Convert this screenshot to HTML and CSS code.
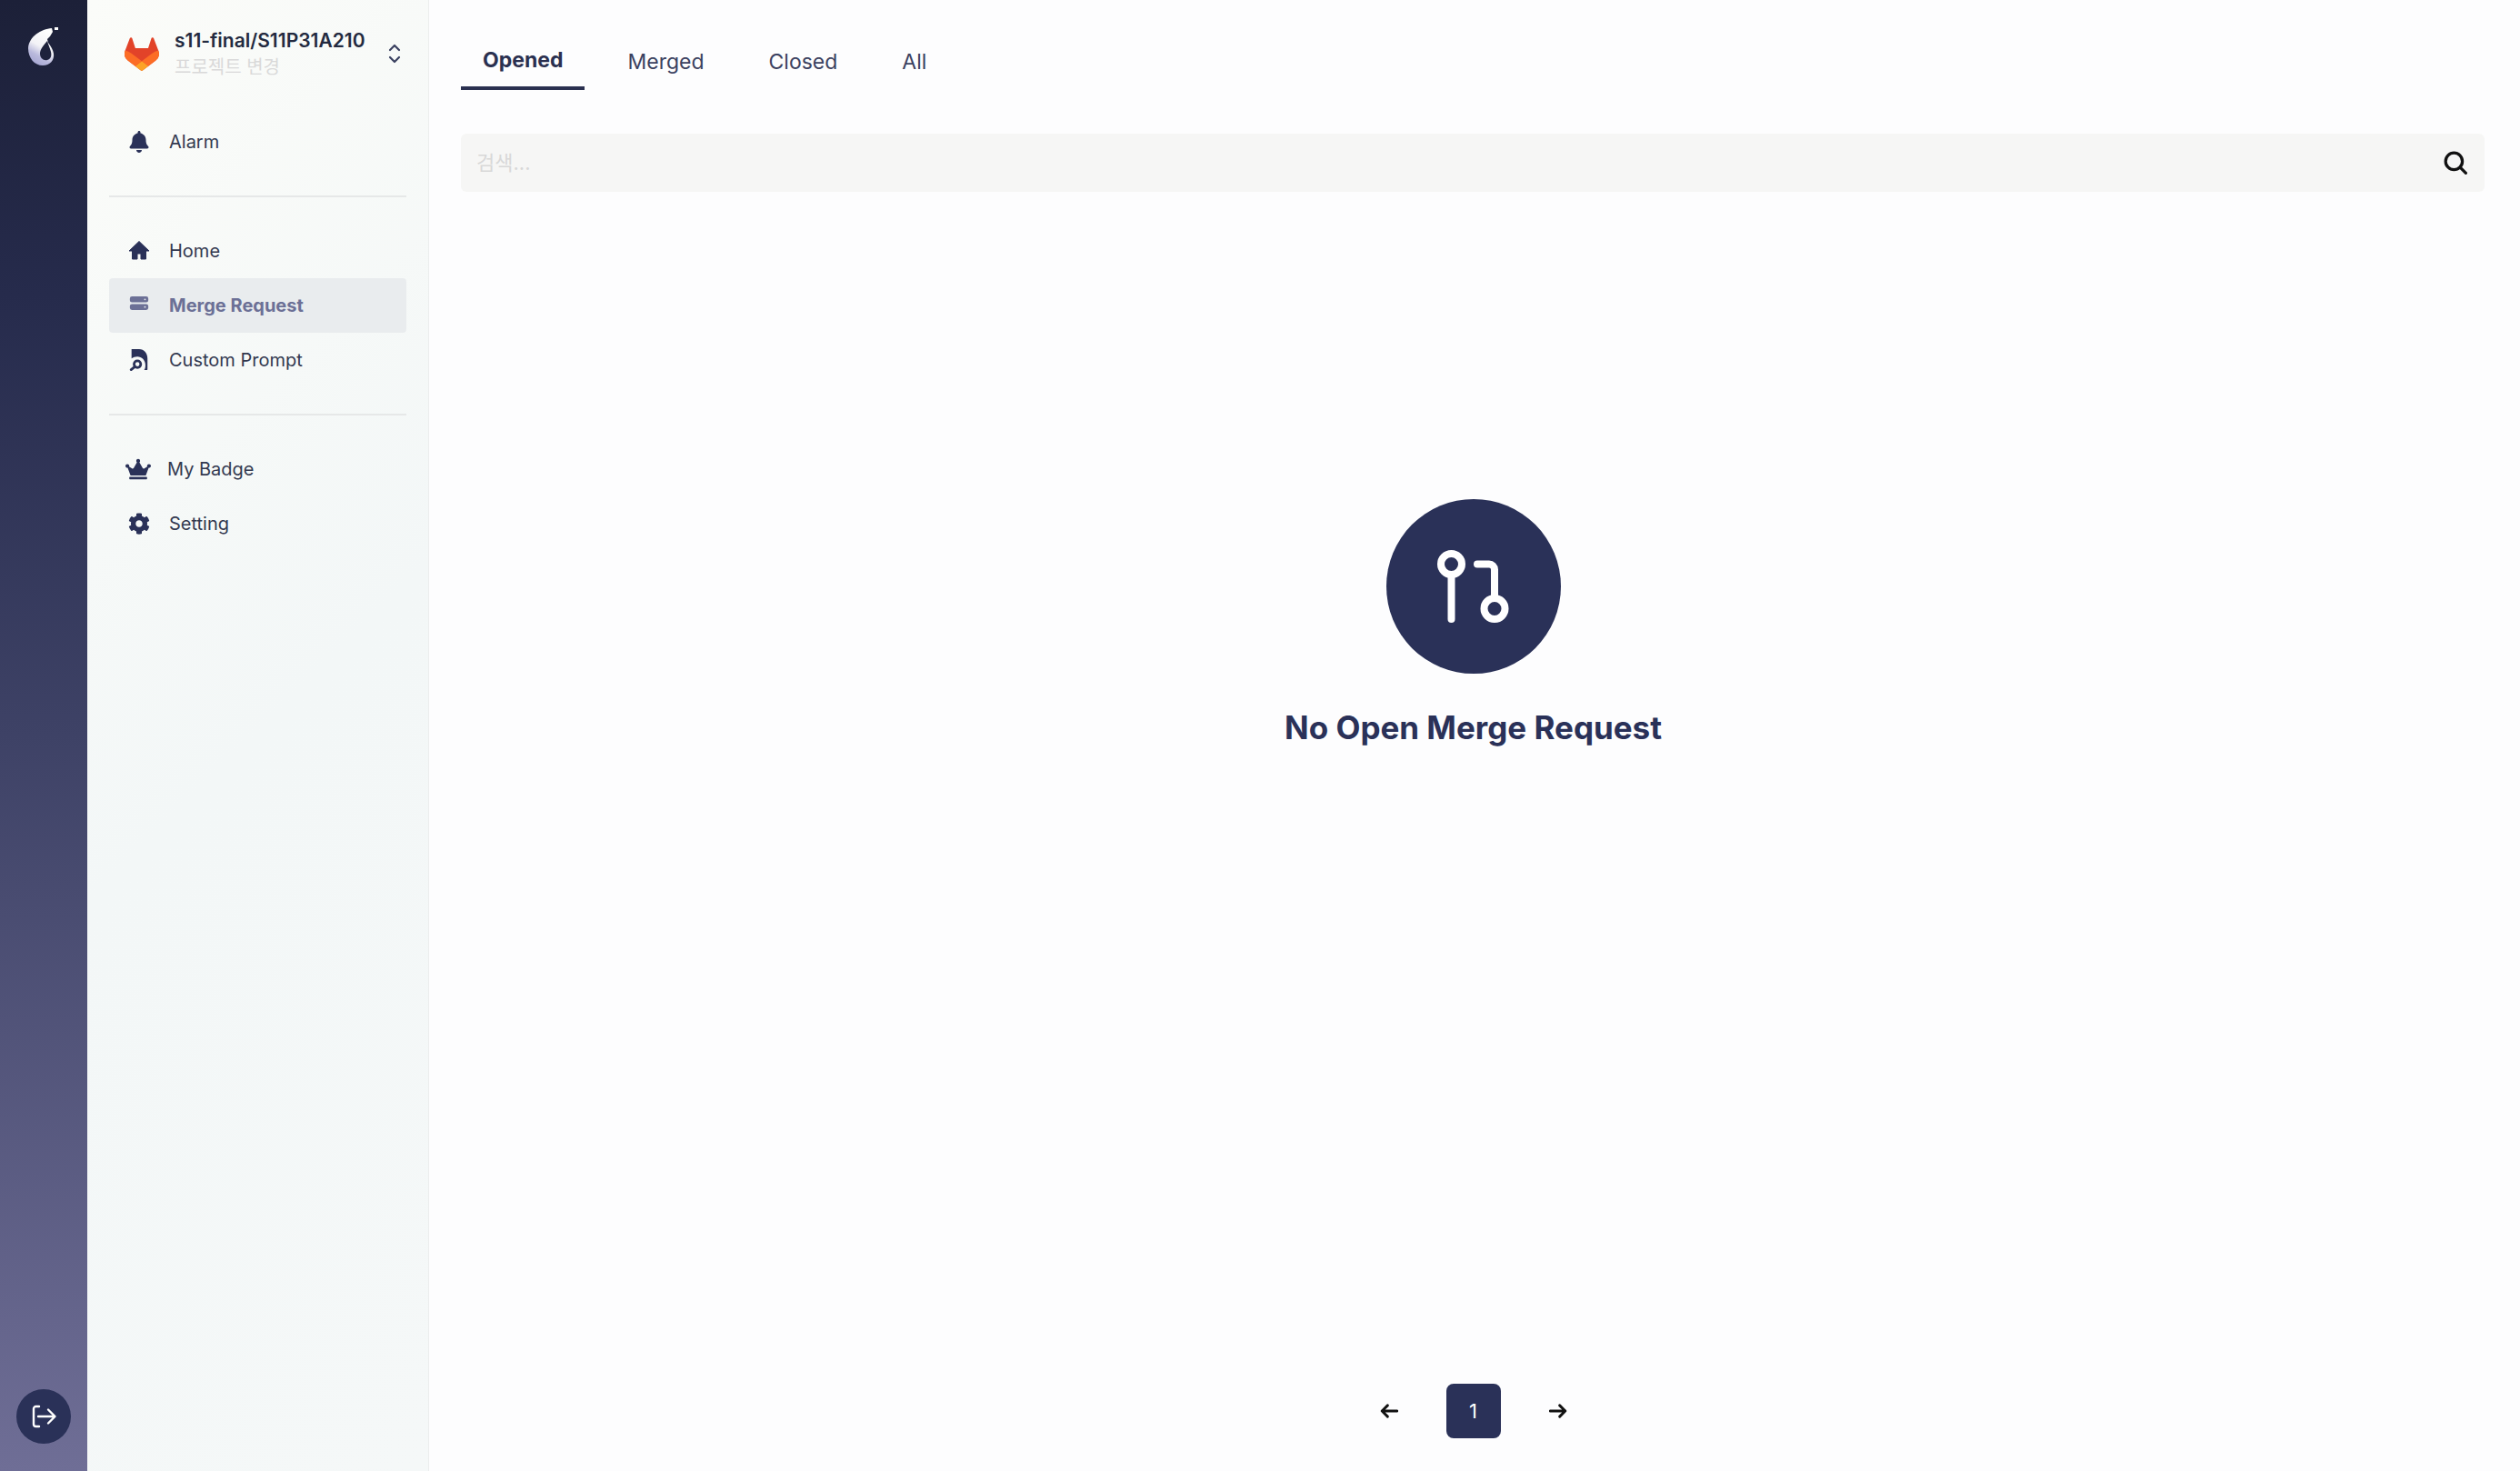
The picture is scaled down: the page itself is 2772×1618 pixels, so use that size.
FILE: index.html
```html
<!DOCTYPE html>
<html lang="en">
<head>
    <meta charset="UTF-8">
    <meta name="viewport" content="width=device-width, initial-scale=1.0">
    <title>Merge Request</title>
    <link rel="stylesheet" href="styles.css">
</head>
<body>
    <div class="app">
        <aside class="rail">
            <svg class="rail-logo" viewBox="0 0 34 42">
                <defs>
                    <linearGradient id="logoFill" x1="0.7" y1="0" x2="0.3" y2="1">
                        <stop offset="0" stop-color="#ffffff"/>
                        <stop offset="0.5" stop-color="#f2f2f6"/>
                        <stop offset="0.75" stop-color="#b9b9dc"/>
                        <stop offset="1" stop-color="#a5a5d2"/>
                    </linearGradient>
                </defs>
                <path fill="url(#logoFill)" fill-rule="evenodd" d="M26 1C14 2 1 10 0 23c0 11 7 19 16 19 8 0 13-6 12-13-.5-4-3-8-6-12l-1-4 3-3 3-5zM21 15c-4 5-8 9-8 14 0 5 4 8 8 7 4-1 5-5 4-9-1-4-3-8-4-12z"/>
                <rect x="29" y="0" width="4" height="3" fill="#ffffff"/>
            </svg>
            <button class="logout" type="button" aria-label="Logout">
                <svg viewBox="0 0 32 32" fill="none" stroke="currentColor" stroke-width="2.4" stroke-linecap="round" stroke-linejoin="round">
                    <path d="M11 5H7.500A2.500 2.500 0 0 0 5 7.500v17A2.500 2.500 0 0 0 7.500 27H11"/>
                    <path d="M10 16h18M21 8.500l7.500 7.500-7.500 7.500"/>
                </svg>
            </button>
        </aside>

        <nav class="sidebar">
            <div class="project">
                <svg class="gitlab-logo" viewBox="0 0 25 24">
                    <path fill="#E24329" d="m24.507 9.5-.034-.09L21.082.562a.896.896 0 0 0-1.694.091l-2.29 7.01H7.825L5.535.653a.898.898 0 0 0-1.694-.09L.451 9.411.416 9.5a6.297 6.297 0 0 0 2.09 7.278l.012.01.03.022 5.16 3.867 2.56 1.935 1.554 1.176a1.051 1.051 0 0 0 1.268 0l1.555-1.176 2.56-1.935 5.197-3.89.014-.01A6.297 6.297 0 0 0 24.507 9.5Z"/>
                    <path fill="#FC6D26" d="m24.507 9.5-.034-.09a11.44 11.44 0 0 0-4.56 2.051l-7.447 5.632 4.742 3.584 5.197-3.89.014-.01A6.297 6.297 0 0 0 24.507 9.5Z"/>
                    <path fill="#FCA326" d="m7.707 20.677 2.56 1.935 1.555 1.176a1.051 1.051 0 0 0 1.268 0l1.555-1.176 2.56-1.935-4.743-3.584-4.755 3.584Z"/>
                    <path fill="#FC6D26" d="M5.01 11.461a11.43 11.43 0 0 0-4.56-2.05L.416 9.5a6.297 6.297 0 0 0 2.09 7.278l.012.01.03.022 5.16 3.867 4.745-3.584-7.444-5.632Z"/>
                </svg>
                <div class="project-text">
                    <div class="project-name">s11-final/S11P31A210</div>
                    <div class="project-change">프로젝트 변경</div>
                </div>
                <svg class="project-switch" viewBox="0 0 14 22" fill="none" stroke="currentColor" stroke-width="2.2" stroke-linecap="round" stroke-linejoin="round">
                    <path d="M2 7l5-5 5 5M2 15l5 5 5-5"/>
                </svg>
            </div>

            <div class="nav-group nav-group-alarm">
                <a class="nav-item">
                    <svg class="nav-icon" viewBox="0 0 448 512"><path d="M224 512c35.32 0 63.97-28.65 63.97-64H160.03c0 35.35 28.65 64 63.97 64zm215.39-149.71c-19.32-20.76-55.47-51.99-55.47-154.29 0-77.7-54.48-139.9-127.94-155.16V32c0-17.67-14.32-32-31.98-32s-31.98 14.33-31.98 32v20.84C118.56 68.1 64.08 130.3 64.08 208c0 102.3-36.15 133.53-55.47 154.29-6 6.45-8.66 14.16-8.61 21.71.11 16.4 12.98 32 32.1 32h383.8c19.12 0 32-15.6 32.1-32 .05-7.55-2.61-15.27-8.61-21.71z"/></svg>
                    <span>Alarm</span>
                </a>
            </div>

            <div class="nav-group">
                <a class="nav-item">
                    <svg class="nav-icon" viewBox="0 0 24 24"><path stroke="currentColor" stroke-width="1" stroke-linejoin="round" d="M10 21v-6h4v6h5.500v-9H23L12 1.500 1 12h3.500v9z"/></svg>
                    <span>Home</span>
                </a>
                <a class="nav-item active">
                    <svg class="nav-icon" viewBox="-2 1.700 26 22"><path fill-rule="evenodd" d="M2.500 2h17A2.500 2.500 0 0 1 22 4.500v2A2.500 2.500 0 0 1 19.500 9h-17A2.500 2.500 0 0 1 0 6.500v-2A2.500 2.500 0 0 1 2.500 2zM18 4.500a1 1 0 1 0 0 2 1 1 0 0 0 0-2zM2.500 11h17a2.500 2.500 0 0 1 2.500 2.500v2a2.500 2.500 0 0 1-2.500 2.500h-17A2.500 2.500 0 0 1 0 15.500v-2A2.500 2.500 0 0 1 2.500 11zM18 13.500a1 1 0 1 0 0 2 1 1 0 0 0 0-2z"/></svg>
                    <span>Merge Request</span>
                </a>
                <a class="nav-item">
                    <svg class="nav-icon" viewBox="0 0 24 26"><path d="M3 0h9c6 0 10 5 10 11v13a1 1 0 0 1-1 1h-3c1.500-2 1.500-4 1.500-6C19.500 13 15 9 10 9 7 9 5 10 3 11z"/><circle cx="10" cy="18" r="4" fill="none" stroke="currentColor" stroke-width="3"/><path fill="none" stroke="currentColor" stroke-width="3" stroke-linecap="round" d="M7 21l-4.500 3.500"/></svg>
                    <span>Custom Prompt</span>
                </a>
            </div>

            <div class="nav-group nav-group-last">
                <a class="nav-item nav-item-badge">
                    <svg class="nav-icon nav-icon-wide" viewBox="0 0 640 512"><path d="M528 448H112c-8.800 0-16 7.200-16 16v32c0 8.800 7.200 16 16 16h416c8.800 0 16-7.200 16-16v-32c0-8.800-7.200-16-16-16zm64-320c-26.500 0-48 21.500-48 48 0 7.100 1.600 13.700 4.400 19.800L476 239.200c-15.400 9.200-35.300 4-44.200-11.600L350.300 85C361 76.200 368 63 368 48c0-26.500-21.500-48-48-48s-48 21.500-48 48c0 15 7 28.200 17.700 37l-81.500 142.600c-8.900 15.600-28.900 20.800-44.200 11.600l-72.300-43.400c2.700-6 4.400-12.700 4.400-19.800 0-26.500-21.500-48-48-48S0 149.500 0 176s21.500 48 48 48c2.600 0 5.200-.4 7.700-.8L128 416h384l72.300-192.800c2.500.4 5.100.8 7.700.8 26.500 0 48-21.500 48-48s-21.500-48-48-48z"/></svg>
                    <span>My Badge</span>
                </a>
                <a class="nav-item">
                    <svg class="nav-icon" viewBox="0 0 512 512"><path d="M487.400 315.700l-42.600-24.600c4.300-23.200 4.300-47 0-70.200l42.600-24.600c4.900-2.800 7.100-8.600 5.500-14-11.100-35.600-30-67.800-54.700-94.600-3.800-4.100-10-5.100-14.800-2.300L380.800 110c-17.900-15.400-38.500-27.300-60.800-35.100V25.800c0-5.600-3.900-10.500-9.400-11.700-36.700-8.200-74.300-7.800-109.200 0-5.500 1.200-9.400 6.100-9.400 11.700V75c-22.200 7.900-42.800 19.800-60.800 35.100L88.700 85.500c-4.900-2.800-11-1.900-14.800 2.300-24.700 26.700-43.600 58.900-54.700 94.600-1.700 5.400.6 11.200 5.500 14L67.300 221c-4.300 23.200-4.300 47 0 70.200l-42.600 24.600c-4.900 2.800-7.100 8.600-5.500 14 11.100 35.600 30 67.800 54.700 94.600 3.800 4.100 10 5.100 14.800 2.300l42.600-24.600c17.900 15.400 38.500 27.300 60.800 35.100v49.200c0 5.600 3.900 10.500 9.400 11.700 36.700 8.200 74.300 7.800 109.200 0 5.500-1.200 9.400-6.100 9.400-11.700v-49.200c22.200-7.900 42.800-19.800 60.800-35.100l42.600 24.600c4.900 2.800 11 1.900 14.800-2.300 24.700-26.700 43.600-58.900 54.700-94.600 1.500-5.500-.7-11.300-5.600-14.100zM256 336c-44.100 0-80-35.900-80-80s35.900-80 80-80 80 35.900 80 80-35.900 80-80 80z"/></svg>
                    <span>Setting</span>
                </a>
            </div>
        </nav>

        <main class="main">
            <div class="tabs">
                <button class="tab active" type="button">Opened</button>
                <button class="tab" type="button">Merged</button>
                <button class="tab" type="button">Closed</button>
                <button class="tab" type="button">All</button>
            </div>

            <div class="search">
                <input class="search-input" type="text" placeholder="검색...">
                <svg class="search-icon" viewBox="0 0 24 24" fill="none" stroke="currentColor" stroke-width="3" stroke-linecap="round">
                    <circle cx="10.500" cy="10.500" r="8.500"/>
                    <path d="M17 17l5.500 5.500"/>
                </svg>
            </div>

            <div class="empty">
                <div class="empty-circle">
                    <svg viewBox="0 0 80 80" fill="none" stroke="currentColor" stroke-width="8" stroke-linecap="round" stroke-linejoin="round">
                        <circle cx="15.500" cy="15.500" r="11.500"/>
                        <path d="M15.500 27v49"/>
                        <path d="M44 15.500h13a6 6 0 0 1 6 6V53"/>
                        <circle cx="63" cy="64.500" r="11.500"/>
                    </svg>
                </div>
                <h2 class="empty-title">No Open Merge Request</h2>
            </div>

            <div class="pagination">
                <button class="page-arrow" type="button" aria-label="Previous">
                    <svg viewBox="0 0 18 14" fill="none" stroke="currentColor" stroke-width="2.600" stroke-linecap="round" stroke-linejoin="round"><path d="M17 7H2M7.500 1.500L2 7l5.500 5.500"/></svg>
                </button>
                <button class="page-num" type="button">1</button>
                <button class="page-arrow" type="button" aria-label="Next">
                    <svg viewBox="0 0 18 14" fill="none" stroke="currentColor" stroke-width="2.600" stroke-linecap="round" stroke-linejoin="round"><path d="M1 7h15M10.500 1.500L16 7l-5.500 5.500"/></svg>
                </button>
            </div>
        </main>
    </div>
</body>
</html>
```

FILE: styles.css
```css
* {
    box-sizing: border-box;
}
body {
    font-family: Inter, "Noto Sans CJK KR", sans-serif;
    background-color: #fdfdfe;
    color: #2d3350;
    height: 100vh;
    margin: 0;
    overflow: hidden;
}
button {
    font-family: inherit;
    border: none;
    background: none;
    padding: 0;
    cursor: pointer;
}
.app {
    display: flex;
    height: 100%;
}

/* left rail */
.rail {
    flex: 0 0 96px;
    display: flex;
    flex-direction: column;
    justify-content: space-between;
    align-items: center;
    padding: 30px 0 30px;
    background: linear-gradient(180deg, #1c2038 0%, #262b4c 20%, #3e4266 50%, #6f6e96 100%);
}
.rail-logo {
    width: 34px;
    height: 42px;
}
.logout {
    width: 60px;
    height: 60px;
    border-radius: 50%;
    background-color: #2a3158;
    color: #fff;
    display: flex;
    align-items: center;
    justify-content: center;
}
.logout svg {
    width: 32px;
    height: 32px;
}

/* sidebar */
.sidebar {
    flex: 0 0 376px;
    padding: 0 24px;
    background: linear-gradient(135deg, #fbfcf9 0%, #f3f7f7 50%, #f5f8f8 100%);
    border-right: 1px solid #eceeee;
}
.project {
    display: flex;
    align-items: center;
    height: 100px;
    padding: 10px 0 0 17px;
}
.gitlab-logo {
    width: 38px;
    height: 37px;
    margin-right: 17px;
    margin-top: 8px;
}
.project-text {
    flex: 1;
    padding-top: 8px;
}
.project-name {
    font-size: 21px;
    font-weight: 600;
    line-height: 26px;
    color: #232a40;
}
.project-change {
    margin-top: 4px;
    font-size: 20px;
    line-height: 24px;
    color: #d9d9d9;
}
.project-switch {
    width: 14px;
    height: 22px;
    margin: 8px 6px 0 0;
    color: #3a4060;
}
.nav-group {
    padding: 29px 0;
    border-bottom: 2px solid #e6e8e8;
}
.nav-group-alarm {
    padding: 26px 0 29px;
}
.nav-group-last {
    border-bottom: none;
}
.nav-item {
    display: flex;
    align-items: center;
    height: 60px;
    padding-left: 21px;
    font-size: 20px;
    color: #333950;
    border-radius: 4px;
}
.nav-item.active {
    background-color: #e9ecee;
    color: #6c7096;
    font-weight: 700;
}
.nav-item-badge {
    padding-left: 18px;
}
.nav-icon {
    flex: 0 0 24px;
    width: 24px;
    height: 24px;
    margin-right: 21px;
    fill: currentColor;
    color: #2a3158;
}
.active .nav-icon {
    color: #6c7096;
}
.nav-icon-wide {
    flex-basis: 28px;
    width: 28px;
    margin-right: 18px;
}

/* main */
.main {
    flex: 1;
    min-width: 0;
    display: flex;
    flex-direction: column;
    padding: 0 39px 0 35px;
}
.tabs {
    display: flex;
    gap: 23px;
    padding-top: 32px;
}
.tab {
    height: 67px;
    padding: 8px 24px 0;
    font-size: 23px;
    color: #3b4160;
    border-bottom: 4px solid transparent;
}
.tab.active {
    font-weight: 700;
    color: #2a3050;
    border-bottom-color: #2a3050;
    padding-top: 5px;
}
.search {
    display: flex;
    align-items: center;
    height: 64px;
    margin-top: 48px;
    padding: 0 19px 0 17px;
    background-color: #f6f6f5;
    border-radius: 6px;
}
.search-input {
    flex: 1;
    border: none;
    background: none;
    outline: none;
    padding: 0;
    font-family: inherit;
    font-size: 22px;
}
.search-input::placeholder {
    color: #d8d8d8;
}
.search-icon {
    width: 26px;
    height: 26px;
    color: #111;
}
.empty {
    display: flex;
    flex-direction: column;
    align-items: center;
    padding: 338px 0 0 1px;
}
.empty-circle {
    width: 192px;
    height: 192px;
    border-radius: 50%;
    background-color: #2a3158;
    color: #fff;
    display: flex;
    align-items: center;
    justify-content: center;
}
.empty-circle svg {
    width: 80px;
    height: 80px;
}
.empty-title {
    margin: 37px 0 0;
    font-size: 35px;
    font-weight: 700;
    line-height: 44px;
    color: #2a3158;
}
.pagination {
    margin-top: auto;
    margin-bottom: 36px;
    padding-left: 1px;
    display: flex;
    justify-content: center;
    align-items: center;
    gap: 47px;
}
.page-arrow {
    width: 32px;
    height: 32px;
    color: #111;
    display: flex;
    align-items: center;
    justify-content: center;
}
.page-arrow svg {
    width: 20px;
    height: 16px;
}
.page-num {
    width: 60px;
    height: 60px;
    border-radius: 8px;
    background-color: #2a3158;
    color: #fff;
    font-size: 22px;
}
```
